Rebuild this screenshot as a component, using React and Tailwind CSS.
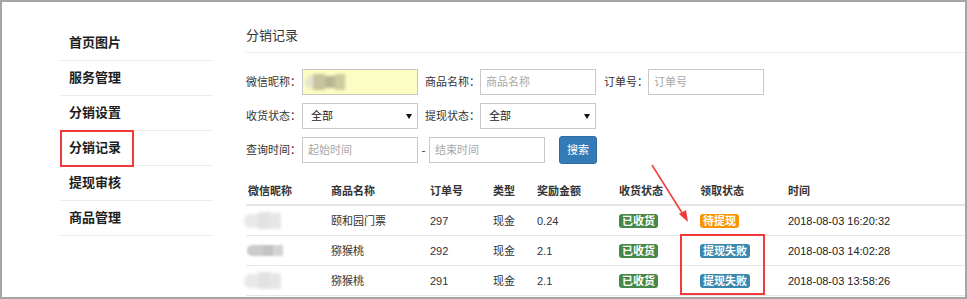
import React from 'react';

const menu = ['首页图片', '服务管理', '分销设置', '分销记录', '提现审核', '商品管理'];

const rows = [
  { blur: 'light', goods: '颐和园门票', no: '297', type: '现金', amount: '0.24', recv: '已收货', state: 'wait', time: '2018-08-03 16:20:32' },
  { blur: 'dark', goods: '猕猴桃', no: '292', type: '现金', amount: '2.1', recv: '已收货', state: 'fail', time: '2018-08-03 14:02:28' },
  { blur: 'light', goods: '猕猴桃', no: '291', type: '现金', amount: '2.1', recv: '已收货', state: 'fail', time: '2018-08-03 13:58:26' },
];

const cols = 'grid grid-cols-[85px_99px_63px_44px_82px_81px_88px_1fr] items-center';

function Badge({ color, children }) {
  return (
    <span className={`inline-block ${color} text-white font-bold text-[11px] leading-[14px] px-[3px] rounded-[3px]`}>
      {children}
    </span>
  );
}

function TextInput({ placeholder, yellow }) {
  return (
    <div className={`relative w-[116px] h-[26px] border border-[#c8c8c8] flex items-center pl-[5px] ${yellow ? 'bg-[#fbfdc3]' : 'bg-white'}`}>
      {yellow ? (
        <div className="flex items-center blur-[1.5px] -ml-[3px]">
          <div className="w-[8px] h-[14px] bg-[#e6e6d0] rounded-l-full" />
          <div className="w-[12px] h-[16px] bg-[#c6c39d]" />
          <div className="w-[10px] h-[12px] bg-[#b8b592]" />
          <div className="w-[10px] h-[16px] bg-[#cdca9f]" />
        </div>
      ) : (
        <span className="text-[#a8a8a8]">{placeholder}</span>
      )}
    </div>
  );
}

function Select() {
  return (
    <div className="w-[116px] h-[26px] border border-[#c8c8c8] bg-white flex items-center justify-between pl-[8px] pr-[5px] text-[#222]">
      <span>全部</span>
      <span className="w-0 h-0 border-l-[3px] border-r-[3px] border-t-[5px] border-l-transparent border-r-transparent border-t-[#111]" />
    </div>
  );
}

function Nick({ kind }) {
  if (kind === 'dark') {
    return (
      <div className="flex items-center blur-[1px]">
        <div className="w-[16px] h-[11px] bg-[#cbcbcb] rounded-l-full" />
        <div className="w-[10px] h-[11px] bg-[#c2c2c2]" />
        <div className="w-[10px] h-[11px] bg-[#d3d3d3]" />
      </div>
    );
  }
  return (
    <div className="flex items-center blur-[1.5px] -ml-[3px]">
      <div className="w-[14px] h-[14px] bg-[#e9e9e9] rounded-l-md" />
      <div className="w-[12px] h-[17px] bg-[#e2e2e2]" />
      <div className="w-[11px] h-[16px] bg-[#e6e6e6]" />
    </div>
  );
}

export default function App() {
  return (
    <div
      className="relative w-[967px] h-[299px] border-2 border-[#a5a5a5] bg-white flex overflow-hidden text-[11px] text-[#333]"
      style={{ fontFamily: '"Liberation Sans", "Noto Sans CJK SC", sans-serif' }}
    >
      {/* sidebar */}
      <div className="ml-[58px] mt-[24px] w-[153px] shrink-0">
        {menu.map((m) => (
          <div key={m} className="relative h-[35px] border-b border-[#ebebeb] flex items-center pl-[9px] text-[13px] font-bold text-[#1e1e1e]">
            {m}
            {m === '分销记录' && (
              <div className="absolute left-0 -top-[1px] w-[74px] h-[37px] border-2 border-[#f23a3a]" />
            )}
          </div>
        ))}
      </div>

      {/* main */}
      <div className="ml-[33px] flex-1">
        <div className="pt-[25px] pb-[7px] border-b border-[#ececec] text-[13px] leading-[18px] text-[#333]">
          分销记录
        </div>

        <div className="mt-[16px] flex flex-col gap-[8px] leading-[16px]">
          <div className="flex items-center h-[26px]">
            <span className="w-[56px]">微信昵称：</span>
            <TextInput yellow />
            <span className="ml-[7px] w-[55px]">商品名称：</span>
            <TextInput placeholder="商品名称" />
            <span className="ml-[8px] w-[44px]">订单号：</span>
            <TextInput placeholder="订单号" />
          </div>
          <div className="flex items-center h-[26px]">
            <span className="w-[56px]">收货状态：</span>
            <Select />
            <span className="ml-[7px] w-[55px]">提现状态：</span>
            <Select />
          </div>
          <div className="flex items-center h-[26px]">
            <span className="w-[56px]">查询时间：</span>
            <TextInput placeholder="起始时间" />
            <span className="w-[11px] text-center">-</span>
            <TextInput placeholder="结束时间" />
            <button className="ml-[14px] w-[38px] h-[28px] rounded-[3px] bg-[#337ab7] border border-[#2e6da4] text-white text-[11px]">
              搜索
            </button>
          </div>
        </div>

        <div className="mt-[14px] leading-[16px]">
          <div className={`${cols} h-[29px] border-b-2 border-[#e6e6e6] font-bold text-[#333]`}>
            <span className="pl-[2px]">微信昵称</span>
            <span>商品名称</span>
            <span>订单号</span>
            <span>类型</span>
            <span>奖励金额</span>
            <span>收货状态</span>
            <span>领取状态</span>
            <span>时间</span>
          </div>
          {rows.map((r, i) => (
            <div key={i} className={`${cols} h-[30px] border-b border-[#e6e6e6] text-[#333]`}>
              <div className="pl-[1px]"><Nick kind={r.blur} /></div>
              <span>{r.goods}</span>
              <span>{r.no}</span>
              <span>{r.type}</span>
              <span>{r.amount}</span>
              <span><Badge color="bg-[#468847]">{r.recv}</Badge></span>
              <span>
                {r.state === 'wait' ? (
                  <Badge color="bg-[#f89406]">待提现</Badge>
                ) : (
                  <Badge color="bg-[#3a87ad]">提现失败</Badge>
                )}
              </span>
              <span className="text-[#222]">{r.time}</span>
            </div>
          ))}
        </div>
      </div>

      {/* annotations */}
      <svg className="absolute left-0 top-0 pointer-events-none" width="967" height="299">
        <line x1="650" y1="163" x2="682" y2="214" stroke="#f03a3a" strokeWidth="1.5" />
        <polygon points="686,220 677,212 684,208" fill="#f03a3a" />
      </svg>
      <div className="absolute left-[678px] top-[232px] w-[85px] h-[61px] border-2 border-[#f23a3a]" />
    </div>
  );
}
